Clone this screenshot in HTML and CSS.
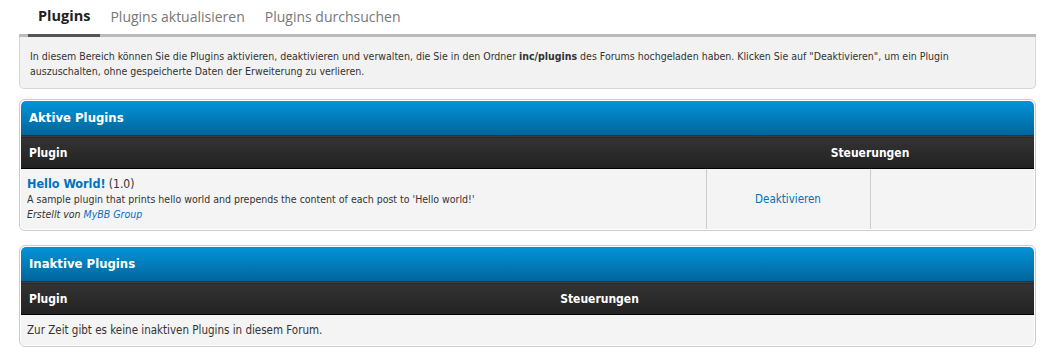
FILE: index.html
```html
<!DOCTYPE html>
<html lang="de">
<head>
  <meta charset="UTF-8" />
  <title>Plugins</title>
  <link rel="stylesheet" href="styles.css">
</head>
<body>
  <div class="page">
    <!-- Reiter -->
    <ul class="tabs">
      <li class="active">Plugins</li>
      <li>Plugins aktualisieren</li>
      <li>Plugins durchsuchen</li>
    </ul>

    <div class="tab-desc">
      In diesem Bereich können Sie die Plugins aktivieren, deaktivieren und verwalten, die Sie in den Ordner <b>inc/plugins</b> des Forums hochgeladen haben. Klicken Sie auf "Deaktivieren", um ein Plugin auszuschalten, ohne gespeicherte Daten der Erweiterung zu verlieren.
    </div>

    <!-- Aktive Plugins -->
    <div class="border-wrap">
      <div class="title">Aktive Plugins</div>
      <table class="general fixed">
        <colgroup>
          <col class="c-plugin">
          <col class="c-action">
          <col>
        </colgroup>
        <thead>
          <tr>
            <th>Plugin</th>
            <th colspan="2" class="center">Steuerungen</th>
          </tr>
        </thead>
        <tbody>
          <tr>
            <td class="plugin-cell">
              <b><a href="#" class="plugin-name">Hello World!</a></b> <span class="version">(1.0)</span><br>
              <span class="smalltext">A sample plugin that prints hello world and prepends the content of each post to 'Hello world!'<br>
              <i>Erstellt von <a href="#">MyBB Group</a></i></span>
            </td>
            <td class="center col-action"><a href="#">Deaktivieren</a></td>
            <td></td>
          </tr>
        </tbody>
      </table>
    </div>

    <!-- Inaktive Plugins -->
    <div class="border-wrap">
      <div class="title">Inaktive Plugins</div>
      <table class="general">
        <thead>
          <tr>
            <th class="col-plugin-inactive">Plugin</th>
            <th class="center">Steuerungen</th>
          </tr>
        </thead>
        <tbody>
          <tr>
            <td colspan="2" class="empty-row">Zur Zeit gibt es keine inaktiven Plugins in diesem Forum.</td>
          </tr>
        </tbody>
      </table>
    </div>
  </div>
</body>
</html>
```

FILE: styles.css
```css
body {
  margin: 0;
  background: #fff;
  font-family: "DejaVu Sans Condensed", "DejaVu Sans", Tahoma, sans-serif;
  font-size: 11px;
  color: #333;
}
a {
  color: #0072bc;
  text-decoration: none;
}
.page {
  padding: 0 15px 0 19px;
}

/* Reiter */
.tabs {
  list-style: none;
  margin: 0;
  padding: 0 0 0 9px;
  display: flex;
  height: 34px;
  border-bottom: 3px solid #bbb;
  font-family: "Open Sans", "Noto Sans", sans-serif;
  font-size: 14px;
}
.tabs li {
  padding: 7px 10px 0;
  color: #777;
  margin-bottom: -3px;
  border-bottom: 3px solid transparent;
}
.tabs li.active {
  color: #222;
  font-weight: bold;
  font-size: 14.5px;
  padding-top: 6px;
  border-bottom-color: #555;
}
.tab-desc {
  background: #f2f2f2;
  border: 1px solid #d6d6d6;
  border-top: 0;
  border-radius: 0 0 5px 5px;
  padding: 12px 70px 9px 10px;
  font-size: 10.5px;
  line-height: 15px;
  margin-bottom: 10px;
}

/* Tabellen */
.border-wrap {
  border: 1px solid #ccc;
  padding: 1px;
  border-radius: 6px;
  margin-bottom: 14px;
  background: #fff;
}
.title {
  background: linear-gradient(to bottom, #0294d8, #02659c);
  border-bottom: 1px solid #0c3c58;
  border-radius: 5px 5px 0 0;
  color: #fff;
  font-weight: bold;
  font-size: 13px;
  height: 34px;
  line-height: 34px;
  padding: 0 8px;
}
table.general {
  width: 100%;
  border-collapse: collapse;
}
table.fixed {
  table-layout: fixed;
}
.c-plugin {
  width: 685px;
}
.c-action {
  width: 164px;
}
table.general th {
  background: linear-gradient(to bottom, #333, #222);
  border-top: 1px solid #3c3c3c;
  border-bottom: 1px solid #000;
  color: #fff;
  font-size: 12px;
  font-weight: bold;
  text-align: left;
  height: 31px;
  padding: 0 8px;
}
table.general td {
  background: #f4f4f4;
  padding: 4px 6px;
  vertical-align: middle;
}
table.general tr:last-child td:first-child {
  border-radius: 0 0 0 5px;
}
table.general tr:last-child td:last-child {
  border-radius: 0 0 5px 0;
}
.center {
  text-align: center !important;
}
.col-action {
  border-left: 1px solid #ccc;
  border-right: 1px solid #ccc;
  font-size: 11.5px;
}
table.general td.plugin-cell {
  padding: 7px 6px 7px;
  line-height: 15px;
}
.plugin-name {
  font-size: 12.5px;
}
.version {
  font-size: 12px;
}
.smalltext {
  font-size: 10.5px;
  line-height: 15px;
}
.col-plugin-inactive {
  width: 128px;
}
.empty-row {
  height: 22px;
  font-size: 11.5px;
}
```
